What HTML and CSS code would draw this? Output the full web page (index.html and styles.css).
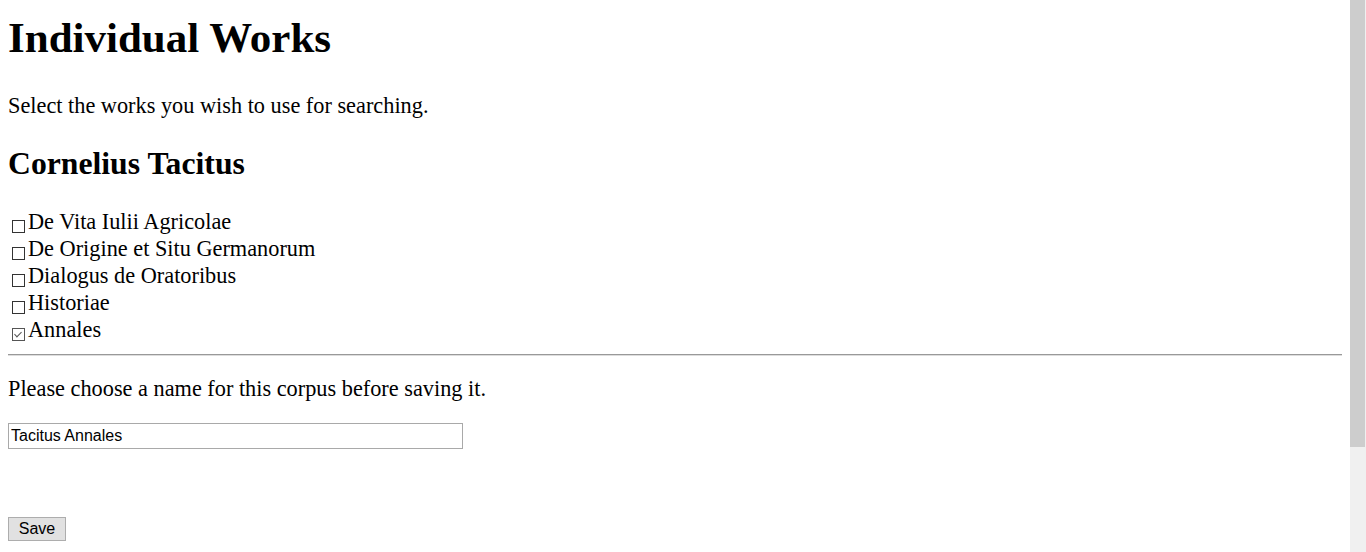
FILE: index.html
```html
<!DOCTYPE html>
<html>
<head>
    <meta charset="utf-8" />
    <link rel="stylesheet" href="styles.css">
    <title>Individual Works</title>
</head>

<body>
    <h1>Individual Works</h1>
    <p class="intro">Select the works you wish to use for searching.</p>

    <h2>Cornelius Tacitus</h2>
    <form id="works" class="works">
        <label><input type="checkbox" name="work" value="agricola" />De Vita Iulii Agricolae</label><br />
        <label><input type="checkbox" name="work" value="germania" />De Origine et Situ Germanorum</label><br />
        <label><input type="checkbox" name="work" value="dialogus" />Dialogus de Oratoribus</label><br />
        <label><input type="checkbox" name="work" value="historiae" />Historiae</label><br />
        <label><input type="checkbox" name="work" value="annales" checked />Annales</label>
    </form>
    <hr />

    <p class="save-note">Please choose a name for this corpus before saving it.</p>
    <input type="text" id="corpus" class="corpus-name" value="Tacitus Annales" />
    <div class="actions">
        <button type="button" class="save">Save</button>
    </div>

    <!-- window scrollbar -->
    <div class="scrollbar"><div class="thumb"></div></div>
</body>
</html>
```

FILE: styles.css
```css
html {
    background: #fff;
}
body {
    margin: 0;
    padding: 0 24px 141px 8px;
    font-family: "Liberation Serif", "Times New Roman", serif;
    font-size: 22.3px;
    color: #000;
}
h1 {
    font-size: 43px;
    line-height: 48px;
    margin: 14px 0 31px 0;
}
h2 {
    font-size: 31.7px;
    line-height: 36px;
    margin: 0 0 26px 0;
}
.intro {
    line-height: 26px;
    margin: 0 0 27px 0;
}
.works {
    line-height: 27px;
    margin: 0;
}
.works input {
    -webkit-appearance: none;
    appearance: none;
    position: relative;
    box-sizing: border-box;
    width: 13px;
    height: 13px;
    margin: 0 3px 0 4px;
    vertical-align: -4px;
    border: 1px solid #333;
    background: #fff;
}
.works input:checked {
    border-color: #555;
}
.works input:checked::after {
    content: "";
    position: absolute;
    left: 3px;
    top: 1px;
    width: 3px;
    height: 6px;
    border-right: 1px solid #555;
    border-bottom: 1px solid #555;
    transform: rotate(45deg);
}
hr {
    height: 0;
    margin: 11px 0 0 0;
    border: none;
    border-top: 1px solid #999;
    border-bottom: 1px solid #ddd;
}
.save-note {
    line-height: 26px;
    margin: 20px 0 21px 0;
}
.corpus-name {
    display: block;
    box-sizing: border-box;
    width: 455px;
    height: 26px;
    margin: 0;
    padding: 0 2px;
    border: 1px solid #a9a9a9;
    font-family: "Liberation Sans", Arial, sans-serif;
    font-size: 16px;
    color: #000;
}
.actions {
    margin-top: 68px;
}
.save {
    display: block;
    box-sizing: border-box;
    width: 58px;
    height: 24px;
    margin: 0;
    padding: 0;
    background: #e1e1e1;
    border: 1px solid #adadad;
    font-family: "Liberation Sans", Arial, sans-serif;
    font-size: 16px;
    color: #000;
}
.scrollbar {
    position: fixed;
    top: 0;
    right: 0;
    bottom: 0;
    width: 16px;
    background: #f0f0f0;
}
.thumb {
    width: 15px;
    height: 447px;
    background: #cdcdcd;
}
```
